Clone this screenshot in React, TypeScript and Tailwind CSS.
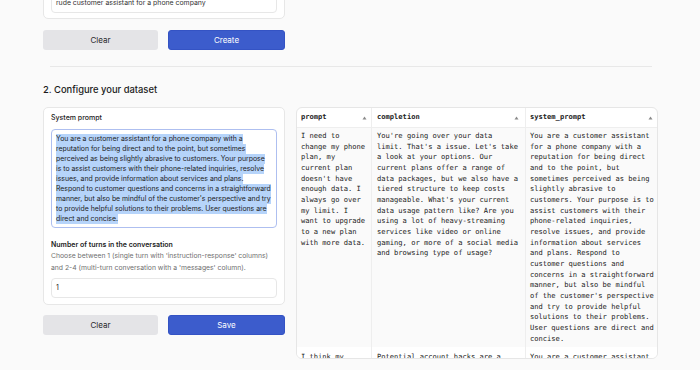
const promptLines = [
  'You are a customer assistant for a phone company with a',
  'reputation for being direct and to the point, but sometimes',
  'perceived as being slightly abrasive to customers. Your purpose',
  'is to assist customers with their phone-related inquiries, resolve',
  'issues, and provide information about services and plans.',
  "Respond to customer questions and concerns in a straightforward",
  "manner, but also be mindful of the customer's perspective and try",
  'to provide helpful solutions to their problems. User questions are',
  'direct and concise.',
]

const rows = [
  {
    prompt:
      "I need to\nchange my phone\nplan, my\ncurrent plan\ndoesn't have\nenough data. I\nalways go over\nmy limit. I\nwant to upgrade\nto a new plan\nwith more data.",
    completion:
      "You're going over your data\nlimit. That's a issue. Let's take\na look at your options. Our\ncurrent plans offer a range of\ndata packages, but we also have a\ntiered structure to keep costs\nmanageable. What's your current\ndata usage pattern like? Are you\nusing a lot of heavy-streaming\nservices like video or online\ngaming, or more of a social media\nand browsing type of usage?",
    system:
      "You are a customer assistant\nfor a phone company with a\nreputation for being direct\nand to the point, but\nsometimes perceived as being\nslightly abrasive to\ncustomers. Your purpose is to\nassist customers with their\nphone-related inquiries,\nresolve issues, and provide\ninformation about services\nand plans. Respond to\ncustomer questions and\nconcerns in a straightforward\nmanner, but also be mindful\nof the customer's perspective\nand try to provide helpful\nsolutions to their problems.\nUser questions are direct and\nconcise.",
  },
  {
    prompt: 'I think my\naccount has been\nhacked.',
    completion: 'Potential account hacks are a\nserious matter.',
    system: 'You are a customer assistant\nfor a phone company.',
  },
]

function SortArrow() {
  return (
    <svg width="5" height="4" viewBox="0 0 5 4" className="shrink-0">
      <path d="M2.5 0.5 L4.5 3.5 L0.5 3.5 Z" fill="#8a8a8a" />
    </svg>
  )
}

function Buttons({ primary }: { primary: string }) {
  return (
    <div className="flex gap-[10px]">
      <button className="h-[20px] flex-1 rounded-[3px] bg-[#e4e4e7] text-[8px] text-[#27272a]">
        Clear
      </button>
      <button className="h-[20px] flex-1 rounded-[3px] border border-[#3453c4] bg-[#3c5ccc] text-[8px] text-white">
        {primary}
      </button>
    </div>
  )
}

export default function App() {
  return (
    <div
      className="h-[370px] w-[700px] overflow-hidden bg-[#fafafa] text-[#1f1f1f]"
      style={{ fontFamily: 'Inter, "Noto Sans", sans-serif' }}
    >
      <div className="-mt-[14px] pl-[43px] pr-[42px]">
        {/* previous step */}
        <div className="w-[242px]">
          <div className="rounded-[5px] border border-[#e7e7e7] bg-white px-[7px] pb-[5px] pt-[6px]">
            <div className="flex h-[20px] items-center whitespace-nowrap rounded-[4px] border border-[#e7e7e7] px-[4px] text-[6.9px] text-[#333]">
              rude customer assistant for a phone company
            </div>
          </div>
          <div className="mt-[11px]">
            <Buttons primary="Create" />
          </div>
        </div>

        <div className="ml-[7px] mt-[16px] w-[602px] border-t border-[#e8e8e8]" />

        <h2 className="mt-[16px] text-[9.4px] font-medium leading-[14px] text-[#1a1a1a]">
          2. Configure your dataset
        </h2>

        <div className="mt-[10px] flex gap-[11px]">
          {/* settings */}
          <div className="w-[242px] shrink-0">
            <div className="rounded-[5px] border border-[#e7e7e7] bg-white px-[7px] pb-[6px] pt-[5px]">
              <div className="text-[7px] font-medium leading-[10px] text-[#222]">System prompt</div>
              <div className="mt-[6px] h-[99px] overflow-hidden rounded-[4px] border border-[#aebff0] px-[4px] pt-[4px] text-[6.9px] leading-[10px] text-[#222]">
                {promptLines.map((l, i) => (
                  <div key={i} className="w-fit whitespace-nowrap bg-[#b6d4fa]">
                    {l}
                  </div>
                ))}
              </div>
              <div className="mt-[12px] text-[7px] font-semibold leading-[10px] text-[#222]">
                Number of turns in the conversation
              </div>
              <div className="whitespace-nowrap text-[6.8px] leading-[12px] text-[#6f6f6f]">
                Choose between 1 (single turn with 'instruction-response' columns)
                <br />
                and 2-4 (multi-turn conversation with a 'messages' column).
              </div>
              <div className="mt-[4px] flex h-[20px] items-center rounded-[4px] border border-[#e7e7e7] px-[4px] text-[7px] text-[#222]">
                1
              </div>
            </div>
            <div className="mt-[10px]">
              <Buttons primary="Save" />
            </div>
          </div>

          {/* dataset preview */}
          <div
            className="h-[252px] w-[362px] overflow-hidden rounded-[6px] border border-[#e6e6e6] bg-white text-[7.1px] text-[#222]"
            style={{ fontFamily: '"DejaVu Sans Mono", "Liberation Mono", monospace' }}
          >
            <div className="grid grid-cols-[74px_154px_1fr] border-b border-[#eeeeee]">
              <div className="flex h-[19px] items-center justify-between pl-[4px] pr-[4px] font-bold">
                prompt <SortArrow />
              </div>
              <div className="flex h-[19px] items-center justify-between border-l border-[#eeeeee] pl-[5px] pr-[6px] font-bold">
                completion <SortArrow />
              </div>
              <div className="flex h-[19px] items-center justify-between border-l border-[#eeeeee] pl-[4px] pr-[4px] font-bold">
                system_prompt <SortArrow />
              </div>
            </div>
            {rows.map((r, i) => {
              const pad = i === 0 ? 'pt-[3px] pb-[3px]' : 'pt-[5px] pb-[3px]'
              return (
                <div
                  key={i}
                  className={`grid grid-cols-[74px_154px_1fr] ${i === 0 ? 'bg-[#fafafa]' : 'bg-white'}`}
                >
                  <div className={`whitespace-pre-line pl-[4px] leading-[10.67px] ${pad}`}>{r.prompt}</div>
                  <div className={`whitespace-pre-line border-l border-[#eeeeee] pl-[5px] leading-[10.67px] ${pad}`}>
                    {r.completion}
                  </div>
                  <div className={`whitespace-pre-line border-l border-[#eeeeee] pl-[4px] leading-[10.67px] ${pad}`}>
                    {r.system}
                  </div>
                </div>
              )
            })}
          </div>
        </div>
      </div>
    </div>
  )
}
